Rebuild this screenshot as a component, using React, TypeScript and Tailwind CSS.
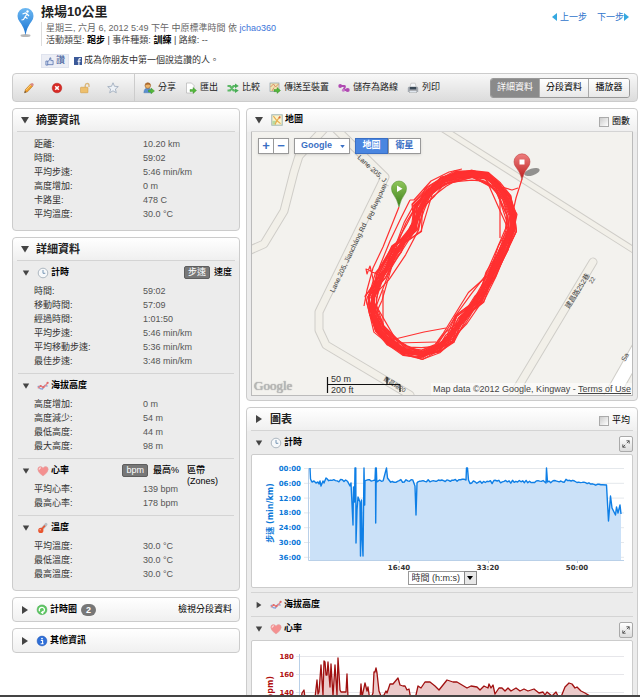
import React, { useId, useState } from 'react';

const FONT = "font-['Liberation_Sans','Noto_Sans_CJK_TC',sans-serif]";
const AXIS_FONT = "font-['DejaVu_Sans','Noto_Sans_CJK_TC',sans-serif]";

type Point = [number, number];
type Row = [string, string];

const summaryRows: Row[] = [
  ['距離:', '10.20 km'],
  ['時間:', '59:02'],
  ['平均步速:', '5:46 min/km'],
  ['高度增加:', '0 m'],
  ['卡路里:', '478 C'],
  ['平均溫度:', '30.0 °C'],
];

const timingRows: Row[] = [
  ['時間:', '59:02'],
  ['移動時間:', '57:09'],
  ['經過時間:', '1:01:50'],
  ['平均步速:', '5:46 min/km'],
  ['平均移動步速:', '5:36 min/km'],
  ['最佳步速:', '3:48 min/km'],
];

const elevationRows: Row[] = [
  ['高度增加:', '0 m'],
  ['高度減少:', '54 m'],
  ['最低高度:', '44 m'],
  ['最大高度:', '98 m'],
];

const heartRows: Row[] = [
  ['平均心率:', '139 bpm'],
  ['最高心率:', '178 bpm'],
];

const tempRows: Row[] = [
  ['平均溫度:', '30.0 °C'],
  ['最低溫度:', '30.0 °C'],
  ['最高溫度:', '30.0 °C'],
];

// Small seeded generator, so the drawing is the same on every render
const makeRandom = (seed: number) => {
  let s = seed;
  return () => {
    s = (s * 1103515245 + 12345) % 2147483648;
    return s / 2147483648;
  };
};

const toPath = (pts: Point[]) => pts.map((p, i) => `${i ? 'L' : 'M'}${p[0].toFixed(1)} ${p[1].toFixed(1)}`).join('');

/* ---------- Track laps ---------- */

const trackCentre: Point[] = [
  [413, 227], [420, 208], [430, 192], [443, 181], [457, 176], [472, 174], [486, 177], [497, 186], [506, 198],
  [512, 215], [511, 230], [504, 248], [491, 275], [477, 298], [462, 320], [449, 338], [437, 348], [422, 354],
  [405, 351], [390, 341], [379, 329], [373, 313], [373, 298], [382, 276], [398, 250],
];

// How far the laps drift apart on each stretch of the track
const spreadAt = (i: number) => {
  if (i > 21 || i < 2) return 13;
  if (i > 12 && i < 16) return 13;
  return 5;
};

const buildLaps = () => {
  const rnd = makeRandom(77);
  const n = trackCentre.length;
  const laps: string[] = [];
  for (let lap = 0; lap < 24; lap++) {
    const base = (rnd() - 0.5) * 9;
    const pts: Point[] = [];
    for (let i = 0; i < n; i++) {
      if (rnd() < 0.1) continue;
      const prev = trackCentre[(i + n - 1) % n];
      const next = trackCentre[(i + 1) % n];
      const len = Math.hypot(next[0] - prev[0], next[1] - prev[1]);
      const off = base + (rnd() - 0.5) * spreadAt(i);
      pts.push([
        trackCentre[i][0] + (-(next[1] - prev[1]) / len) * off,
        trackCentre[i][1] + ((next[0] - prev[0]) / len) * off,
      ]);
    }
    laps.push(toPath(pts) + 'Z');
  }
  return laps;
};

const laps = buildLaps();

/* ---------- Chart data ---------- */

const wiggle = (x0: number, x1: number, y0: number, y1: number, amp: number, seed: number): Point[] => {
  const rnd = makeRandom(seed);
  const pts: Point[] = [];
  for (let x = x0; x <= x1; x += 1.7) {
    const t = (x - x0) / (x1 - x0);
    pts.push([x, y0 + (y1 - y0) * t + (rnd() - 0.5) * amp * 2]);
  }
  return pts;
};

const pace: Point[] = [
  [310, 468], [310.5, 479], [312, 482], [314, 481], [316, 483], [318, 482], [319, 484], [320, 481], [321, 486],
  [323, 481], [324, 483], [326, 478],
  ...wiggle(327, 348, 480, 481, 1.3, 4),
  [350, 486], [351, 483], [353, 525], [353.5, 487], [354.5, 502], [355, 468], [355.8, 468], [356, 543], [357, 510],
  [358, 497], [360, 502], [360.5, 556], [361.5, 500], [362, 535], [363, 556], [364, 468], [364.7, 505], [365, 481],
  ...wiggle(366, 374, 480, 481, 1.3, 9),
  [375, 480], [375.5, 468], [375.7, 523], [376.3, 468], [376.8, 482],
  ...wiggle(378, 384, 481, 480, 1.2, 3),
  [386.5, 468], [387.5, 478],
  ...wiggle(389, 413, 481, 481, 1.5, 12),
  [415, 486], [416, 515], [417, 483],
  ...wiggle(418, 464, 481, 480, 1.3, 21),
  [466, 480], [466.5, 468], [467.5, 468], [468.5, 480],
  ...wiggle(470, 544, 482, 482, 1.7, 31),
  [546, 483], [546.5, 468], [547.5, 482],
  ...wiggle(549, 565, 482, 481, 1.2, 8),
  ...wiggle(566, 576, 480, 481, 0.8, 6),
  ...wiggle(577, 604, 482, 485.5, 1.1, 15),
  [606.5, 485], [608.5, 521], [610.5, 496], [612, 508], [614, 512], [615.5, 515], [616.5, 507], [618, 513],
  [620, 505], [621, 514],
];

const heart: Point[] = [
  [301, 700], [302, 692], [304, 689], [305, 697], [315, 697], [317, 679], [318, 693], [319, 691], [321, 664],
  [323, 694], [324, 660], [325, 661], [326, 674], [327, 674], [328, 661], [330, 686], [331, 663], [333, 695],
  [335, 664], [337, 694], [338, 657], [340, 689], [341, 691], [346, 691], [347, 673], [348, 697], [360, 698],
  [361, 683], [362, 696], [365, 682], [367, 690], [368, 686], [370, 700], [373, 692], [374, 671], [375, 671],
  [376, 667], [377, 672], [379, 690], [381, 695], [384, 694], [386, 690], [387, 692], [390, 683], [393, 683],
  [398, 677], [400, 684], [403, 685], [405, 685], [407, 689], [409, 688], [411, 699], [416, 694], [418, 685],
  [421, 687], [425, 681], [430, 681], [435, 685], [439, 689], [443, 684], [447, 679], [453, 681], [457, 681],
  [462, 684], [467, 687], [471, 685], [477, 686], [480, 689], [484, 685], [488, 687], [489, 683], [491, 687],
  [493, 684], [495, 693], [499, 687], [502, 687], [505, 690], [508, 687], [511, 690], [516, 687], [520, 690],
  [524, 688], [528, 690], [534, 688], [539, 692], [543, 691], [545, 694], [547, 691], [552, 695], [556, 691],
  [558, 695], [561, 696], [565, 686], [569, 682], [572, 683], [575, 687], [577, 686], [581, 690], [585, 692],
  [590, 695], [600, 699], [622, 705],
];

const areaPath = (pts: Point[], base: number) =>
  `${toPath(pts)}L${pts[pts.length - 1][0]} ${base}L${pts[0][0]} ${base}Z`;

/* ---------- Icons ---------- */

interface IconProps {
  children: React.ReactNode;
}

const Icon: React.FC<IconProps> = ({ children }) => (
  <svg viewBox="0 0 12 12" className="w-3 h-3 shrink-0" aria-hidden="true">{children}</svg>
);

const PencilIcon = () => (
  <Icon>
    <path d="M1.5 10.8 2.4 7.6 7.6 2 9.8 4.1 4.6 9.7Z" fill="#f0a02c" stroke="#a8661a" strokeWidth=".5" />
    <path d="M7.2 2.4 8.4 1.2Q9.3.6 10.2 1.6 11.2 2.6 10.5 3.4L9.4 4.6Z" fill="#d98a86" />
    <path d="M1.5 10.8 2 8.9 3.3 10.2Z" fill="#444" />
    <path d="M3.2 8 7.8 3" stroke="#ffdc8a" strokeWidth=".8" />
  </Icon>
);

const CloseIcon = () => (
  <Icon>
    <circle cx="6" cy="6" r="4.8" fill="#d82a25" stroke="#b01c18" strokeWidth=".5" />
    <path d="M4.2 4.2 7.8 7.8M7.8 4.2 4.2 7.8" stroke="#fff" strokeWidth="1.6" />
  </Icon>
);

const LockIcon = () => (
  <Icon>
    <path d="M6.2 5.5V3.5Q6.4 1.5 8.2 1.5T10 3.5V5" fill="none" stroke="#d9b67a" strokeWidth="1.3" />
    <rect x="1.5" y="5.2" width="7.5" height="5.6" rx=".6" fill="#eab65c" stroke="#cf9a45" strokeWidth=".5" />
    <path d="M2 7H8.5M2 9H8.5" stroke="#f8d898" strokeWidth=".6" />
  </Icon>
);

const StarIcon = () => (
  <Icon>
    <path d="M6 .8 7.5 4.3 11.3 4.6 8.4 7.1 9.3 10.8 6 8.8 2.7 10.8 3.6 7.1.7 4.6 4.5 4.3Z" fill="#edf1f6" stroke="#9aa8ba" strokeWidth=".8" />
  </Icon>
);

const ShareIcon = () => (
  <Icon>
    <path d="M.8 10.8Q1 6 4.8 6T8.5 10.8Z" fill="#5a8fd0" stroke="#3f6ea8" strokeWidth=".4" />
    <circle cx="4.8" cy="3.6" r="2.8" fill="#edb56c" stroke="#8f5a28" strokeWidth=".6" />
    <path d="M2 3.400Q2.500.8 5 .8 7.400 1 7.600 3.200 5 1.800 2 3.400Z" fill="#a8662c" />
    <path d="M5.5 8H8V6L11.5 9 8 11.8V10H5.5Z" fill="#54b83c" stroke="#2f8a1e" strokeWidth=".4" />
  </Icon>
);

const ExportIcon = () => (
  <Icon>
    <path d="M1.5 1H6.5L9 3.5V11H1.5Z" fill="#fff" stroke="#aaa" strokeWidth=".6" />
    <path d="M5 7.5H8V5.5L11.5 8.5 8 11.4V9.6H5Z" fill="#54b83c" stroke="#2f8a1e" strokeWidth=".4" />
  </Icon>
);

const CompareIcon = () => (
  <Icon>
    <path d="M.5 4H3L6.5 8.5H9M.5 8.5H3L6.5 4H9" fill="none" stroke="#5cb866" strokeWidth="2.2" />
    <path d="M8 1.4 11.8 4 8 6.2ZM8 6.4 11.8 8.6 8 11Z" fill="#47ad55" />
  </Icon>
);

const SendIcon = () => (
  <Icon>
    <rect x="1" y="1" width="9" height="8.5" fill="#f2e3b0" stroke="#8fa0a8" strokeWidth=".7" />
    <path d="M1.5 5 4.5 2 6.5 5 9.5 2M3 9 5 5.5" stroke="#d27b5a" strokeWidth=".8" fill="none" />
    <path d="M5 7.5H8V5.5L11.5 8.5 8 11.4V9.6H5Z" fill="#54b83c" stroke="#2f8a1e" strokeWidth=".4" />
  </Icon>
);

const CourseIcon = () => (
  <Icon>
    <path d="M2 4H6.4Q7.2 4 6.6 5.6L5.4 8H9.6" fill="none" stroke="#b04ab2" strokeWidth="2" strokeLinejoin="round" />
    <circle cx="2.2" cy="4" r="1.9" fill="#b04ab2" />
    <circle cx="9.6" cy="8" r="2.1" fill="#b04ab2" />
    <circle cx="5.4" cy="8.3" r="1.5" fill="#c87aca" />
  </Icon>
);

const PrintIcon = () => (
  <Icon>
    <path d="M3 5 4 1.2H8.2L9.2 5Z" fill="#f4f6fa" stroke="#aaa" strokeWidth=".5" />
    <path d="M.8 6Q.8 4.8 2 4.8H10Q11.2 4.8 11.2 6V10H.8Z" fill="#a5abb2" />
    <rect x="2.8" y="5" width="6.4" height="2.4" fill="#3a4856" />
    <rect x="2.2" y="8.6" width="7.6" height="2.2" fill="#dfe6ee" stroke="#999" strokeWidth=".4" />
  </Icon>
);

const ClockIcon = () => (
  <Icon>
    <circle cx="6" cy="6" r="4.8" fill="#f6f8fa" stroke="#a5b0ba" strokeWidth=".9" />
    <path d="M6 3V6.3H8.3" fill="none" stroke="#6a8cae" strokeWidth=".9" />
  </Icon>
);

const ElevationIcon = () => (
  <Icon>
    <path d="M.8 5.800 3.200 8.600 5.400 9 7.600 5.400 10.600 6.200" fill="none" stroke="#7f9bd6" strokeWidth="1.2" />
    <path d="M.8 8.200 3.600 5.800 6.200 7.400 8 6 11 2.600" fill="none" stroke="#e88585" strokeWidth="1.4" />
    <circle cx="3.600" cy="6" r="1.100" fill="#e06a6a" />
    <circle cx="6.400" cy="7.200" r="1.100" fill="#e06a6a" />
    <circle cx="10.600" cy="2.800" r="1.100" fill="#e06a6a" />
  </Icon>
);

const HeartIcon = () => (
  <Icon>
    <path d="M6 11Q.8 7.3.8 4.4.9 1.6 3.4 1.6 5.2 1.6 6 3.2 6.8 1.6 8.6 1.6 11.1 1.6 11.2 4.4 11.2 7.3 6 11Z" fill="#f49090" stroke="#e3a5a5" strokeWidth=".6" />
    <path d="M2.2 4.8Q2.2 2.8 4 2.9" stroke="#fcd5d5" strokeWidth="1.2" fill="none" />
  </Icon>
);

const TempIcon = () => (
  <Icon>
    <path d="M4 8 9 2.4" stroke="#b9bec4" strokeWidth="3" strokeLinecap="round" />
    <path d="M4 8 7.6 4" stroke="#e8552f" strokeWidth="1.6" strokeLinecap="round" />
    <circle cx="3.8" cy="8.4" r="2.6" fill="#e8552f" />
    <circle cx="3.2" cy="7.8" r=".8" fill="#f7b29c" />
  </Icon>
);

const LapIcon = () => (
  <Icon>
    <circle cx="6" cy="5.8" r="4.9" fill="#5fc864" stroke="#3da046" strokeWidth=".5" />
    <path d="M3.6 7.2A2.6 2.6 0 1 1 6.6 8.4" fill="none" stroke="#fff" strokeWidth="1.3" />
    <path d="M7.2 6.6V10.4L4.6 8.6Z" fill="#fff" />
  </Icon>
);

const InfoIcon = () => (
  <Icon>
    <circle cx="6" cy="6" r="4.9" fill="#2f6fd8" stroke="#2054ae" strokeWidth=".5" />
    <circle cx="6" cy="3.6" r=".9" fill="#fff" />
    <path d="M4.8 5.5H6.6V8.6M4.6 8.8H7.6" stroke="#fff" strokeWidth="1.1" fill="none" />
  </Icon>
);

const MapIcon = () => (
  <Icon>
    <rect x=".8" y=".8" width="10.4" height="10.4" fill="#fbf4cc" stroke="#9fb5b2" strokeWidth="1" />
    <rect x="1.4" y="6.8" width="3.6" height="3.8" fill="#b7d9a0" />
    <path d="M2.4 2.2 6 6.8 9.6 9.6M4 10.5 6 6.6 9.2 2.2" fill="none" stroke="#e8ad50" strokeWidth="1.2" />
    <circle cx="8.6" cy="3.4" r="1" fill="#d8644a" />
  </Icon>
);

const Arrow: React.FC<{ open: boolean; small?: boolean }> = ({ open, small }) => (
  <svg viewBox="0 0 10 10" className={small ? 'w-2 h-2 shrink-0' : 'w-[10px] h-[10px] shrink-0'} aria-hidden="true">
    <path d={open ? 'M1 2H9L5 8.5Z' : 'M2 1V9L8 5Z'} fill="#444" />
  </svg>
);

/* ---------- Building blocks ---------- */

const DataList: React.FC<{ rows: Row[] }> = ({ rows }) => (
  <dl className="grid grid-cols-[109px_1fr] pl-4 leading-[14px]">
    {rows.map(([label, value]) => (
      <React.Fragment key={label}>
        <dt className="text-[#333] whitespace-nowrap">{label}</dt>
        <dd className="text-[#555] whitespace-nowrap">{value}</dd>
      </React.Fragment>
    ))}
  </dl>
);

interface PanelProps {
  title: string;
  open?: boolean;
  icon?: React.ReactNode;
  extra?: React.ReactNode;
  children?: React.ReactNode;
}

const Panel: React.FC<PanelProps> = ({ title, open = true, icon, extra, children }) => (
  <section className="rounded border border-[#ccc] bg-[#ececec]">
    <div className="px-1 rounded-t bg-linear-to-b from-white to-[#efefef]">
      <div className="h-[23px] px-[3px] flex items-center border-b border-[#d4d4d4]">
        <button className="flex items-center">
          <Arrow open={open} />
          {icon && <span className="ml-[7px]">{icon}</span>}
          <h2 className={icon ? 'ml-[2px] text-[9px] font-bold text-black' : 'ml-[6px] text-[11px] font-bold text-[#222]'}>{title}</h2>
        </button>
        <div className="ml-auto pt-1">{extra}</div>
      </div>
    </div>
    {children}
  </section>
);

interface SubHeadProps {
  title: string;
  icon: React.ReactNode;
  open?: boolean;
  extra?: React.ReactNode;
}

const SubHead: React.FC<SubHeadProps> = ({ title, icon, open = true, extra }) => (
  <div className="h-[23px] flex items-center pl-1">
    <button className="flex items-center">
      <Arrow open={open} small />
      <span className="ml-[7px]">{icon}</span>
      <h3 className="ml-[2px] font-bold text-black">{title}</h3>
    </button>
    <div className="ml-auto">{extra}</div>
  </div>
);

const Collapsed: React.FC<{ title: string; icon: React.ReactNode; children?: React.ReactNode }> = ({ title, icon, children }) => (
  <section className="h-[25px] rounded border border-[#ccc] bg-linear-to-b from-white to-[#f0f0f0] flex items-center px-[7px]">
    <button className="flex items-center">
      <Arrow open={false} />
      <span className="ml-[6px]">{icon}</span>
      <h2 className="ml-[2px] font-bold text-black">{title}</h2>
    </button>
    {children}
  </section>
);

const CheckOption: React.FC<{ label: string }> = ({ label }) => {
  const id = useId();
  return (
    <span className="flex items-center gap-[3px]">
      <input id={id} type="checkbox" className="appearance-none w-[10px] h-[10px] border border-[#aaa] bg-linear-to-br from-[#ccc] to-white checked:bg-[#666]" />
      <label htmlFor={id} className="text-black">{label}</label>
    </span>
  );
};

const ExpandButton = () => (
  <button aria-label="放大" className="flex items-center justify-center w-[14px] h-4 mt-[2px] rounded-[2px] border border-[#aaa] bg-linear-to-b from-white to-[#ddd]">
    <svg viewBox="0 0 10 10" className="w-2 h-2">
      <path d="M5.5 1H9V4.5M9 1 6 4M4.500 9H1V5.500M1 9 4 6" fill="none" stroke="#555" strokeWidth="1.200" />
    </svg>
  </button>
);

/* ---------- Map ---------- */

const roads = [
  'M324 129 299 156 294 172 284 211 264 244 248 251',
  'M336 129 385 177 319 312V330L326 345 410 395',
  'M443 129 640 254',
  'M593 262 512 397',
];

const MapDrawing = () => (
  <svg viewBox="252 132 380 263" className="block w-full" role="img" aria-label="地圖">
    <rect x="252" y="132" width="380" height="263" fill="#f3f2ee" />
    {roads.map((d, i) => (
      <path key={d} d={d} fill="none" stroke="#cfcdc8" strokeWidth={i === 2 ? 7 : 9} strokeLinejoin="round" strokeLinecap="round" />
    ))}
    {roads.map((d, i) => (
      <path key={d} d={d} fill="none" stroke="#f2f0e9" strokeWidth={i === 2 ? 5 : 7} strokeLinejoin="round" strokeLinecap="round" />
    ))}
    <path d="M642 342 608 402" stroke="#cfcdc8" strokeWidth="15" />
    <path d="M642 342 608 402" stroke="#fff" strokeWidth="13" />

    <path id="lane-upper" d="M357 158 384 183 358 236" fill="none" />
    <path id="lane-lower" d="M334 293 375 207" fill="none" />
    <g className={FONT} fill="#444" fontSize="7">
      <text><textPath href="#lane-upper">Lane 205, Jiancháng Rd</textPath></text>
      <text><textPath href="#lane-lower">Lane 205, Jiancháng Rd</textPath></text>
      <text transform="translate(569 309) rotate(-58)">建昌路252巷</text>
      <text transform="translate(592 284) rotate(-58)" fontSize="6">22</text>
      <text transform="translate(383 380) rotate(31)" fontSize="6">建昌路20</text>
      <text transform="translate(625 362) rotate(-60)">Sa</text>
    </g>

    <g fill="none" stroke="#ff3030" strokeWidth="1.2" strokeLinejoin="round">
      {laps.map((d) => <path key={d} d={d} />)}
      <path d={toPath(trackCentre) + 'Z'} strokeWidth="4" />
      <path d="M399 207 383 247 373 268 367 290 364 306" />
      <path d="M410 200 401 218 390 241 379 268" />
      <path d="M410 200 414 200 431 181 449 172 462 169" />
      <path d="M522 179 516 198 512 216M518 188 512 190 502 187" />
      <path d="M500 190V238M383 290V330" />
      <path d="M391 340 424 332 446 328M396 343 436 342" />
      <path d="M366 269 381 276 374 283 370 266 367 274Z" />
      <path d="M420 358 441 346 459 322 478 296" />
    </g>

    <ellipse cx="532" cy="172" rx="8" ry="3.4" fill="#000" opacity=".4" transform="rotate(-18 532 172)" />
    <defs>
      <linearGradient id="pin-green" x1="0" y1="0" x2="0" y2="1">
        <stop offset="0" stopColor="#8fc65b" />
        <stop offset="1" stopColor="#3c7f18" />
      </linearGradient>
      <linearGradient id="pin-red" x1="0" y1="0" x2="0" y2="1">
        <stop offset="0" stopColor="#ee7f7f" />
        <stop offset="1" stopColor="#bb1c1c" />
      </linearGradient>
    </defs>
    <path d="M399 207Q397 199 393.500 194.500 391.500 192 391.500 188.500A7.500 7.500 0 0 1 406.500 188.500Q406.500 192 404.500 194.500 401 199 399 207Z" fill="url(#pin-green)" stroke="#4c8a28" strokeWidth=".5" />
    <path d="M397 185.500 402.500 188.700 397 192Z" fill="#fff" />
    <path d="M522 179.500Q520 172 516.200 167.500 514 165 514 161.800A8 8 0 0 1 530 161.800Q530 165 527.800 167.500 524 172 522 179.500Z" fill="url(#pin-red)" stroke="#b93030" strokeWidth=".5" />
    <rect x="519.500" y="159.500" width="5" height="5" fill="#fff" />

    {/* Scale bar */}
    <rect x="431" y="383" width="201" height="12" fill="#fff" opacity=".55" />
    <path d="M327.500 377V393M327 384.500H400M387 377V384.500M400 384.500V392" fill="none" stroke="#111" strokeWidth="1.200" />
    <g className={FONT} fill="#333" fontSize="9">
      <text x="331" y="382">50 m</text>
      <text x="331" y="393">200 ft</text>
    </g>
  </svg>
);

const mapButton = 'h-4 flex items-center justify-center border border-[#999] bg-white text-[#3a6fc4] font-bold';

const MapView = () => {
  const [type, setType] = useState('地圖');
  return (
    <div className="relative mx-1 mb-1 border-x border-b border-[#bbb] overflow-hidden">
      <MapDrawing />
      <div className="absolute top-[6px] left-[6px] flex items-start gap-[5px]">
        <div className="flex shadow-sm">
          <button className={`${mapButton} w-4 text-[13px]`}>+</button>
          <button className={`${mapButton} w-[15px] text-[13px] border-l-0`}>−</button>
        </div>
        <div className="relative shadow-sm">
          <select aria-label="地圖供應商" className={`${mapButton} appearance-none w-14 pl-[6px]`}>
            <option>Google</option>
          </select>
          <svg viewBox="0 0 6 4" className="absolute right-[5px] top-[7px] w-[5px] h-[3px] pointer-events-none">
            <path d="M0 0H6L3 4Z" fill="#3a6fc4" />
          </svg>
        </div>
        <div className="flex shadow-sm">
          {['地圖', '衛星'].map((t) => (
            <button
              key={t}
              onClick={() => setType(t)}
              className={`h-4 w-[33px] flex items-center justify-center border font-bold ${t === type ? 'bg-[#4a86e0] border-[#3a6fc4] text-white' : 'bg-white border-[#999] text-[#3a6fc4]'}`}
            >
              {t}
            </button>
          ))}
        </div>
      </div>
      <span className="absolute left-[2px] bottom-[1px] font-['Liberation_Serif',serif] text-[13px] leading-4 text-[#bbb] [text-shadow:0_0_1px_#777]">Google</span>
      <p className="absolute right-[1px] bottom-0 leading-3 text-[#444] whitespace-nowrap">
        Map data ©2012 Google, Kingway - <a href="#terms" className="underline">Terms of Use</a>
      </p>
    </div>
  );
};

/* ---------- Charts ---------- */

const paceTicks = ['00:00', '06:00', '12:00', '18:00', '24:00', '30:00', '36:00'];
const timeTicks: [number, string][] = [[399, '16:40'], [488, '33:20'], [577, '50:00']];

const PaceChart = () => (
  <svg viewBox="252 455 380 116" className={`block w-full ${AXIS_FONT}`} role="img" aria-label="步速">
    {paceTicks.map((t, i) => (
      <g key={t}>
        <path d={`M304 ${468.5 + i * 14.8}H624`} stroke="#e4e8ec" />
        <text x="301" y={471 + i * 14.8} textAnchor="end" fontSize="7" fontWeight="bold" fill="#0b78d8">{t}</text>
      </g>
    ))}
    <path d={areaPath(pace, 560)} fill="#cbe1f8" />
    <path d="M308.500 468V560.500H624" fill="none" stroke="#b9d0e8" />
    <path d={toPath(pace)} fill="none" stroke="#0f7fe6" strokeWidth="1.400" strokeLinejoin="round" />
    {timeTicks.map(([x, t]) => (
      <g key={t}>
        <path d={`M${x}.5 560V563`} stroke="#b9d0e8" />
        <text x={x} y="569.500" textAnchor="middle" fontSize="7" fontWeight="bold" fill="#333">{t}</text>
      </g>
    ))}
    <text transform="translate(273 513) rotate(-90)" textAnchor="middle" fontSize="8" fontWeight="bold" fill="#0b78d8">步速 (min/km)</text>
  </svg>
);

const HeartChart = () => (
  <svg viewBox="252 640 380 116" className={`block w-full ${AXIS_FONT}`} role="img" aria-label="心率">
    {['180', '160', '140', '120', '100'].map((t, i) => (
      <g key={t}>
        <path d={`M296 ${655.5 + i * 18}H624`} stroke="#e6e6ea" />
        <text x="294" y={658 + i * 18} textAnchor="end" fontSize="7" fontWeight="bold" fill="#b01010">{t}</text>
      </g>
    ))}
    <path d={areaPath(heart, 745)} fill="#ebcaca" />
    <path d="M299.500 653V745H624" fill="none" stroke="#b9d0e8" />
    <path d={toPath(heart)} fill="none" stroke="#a01010" strokeWidth="1.300" strokeLinejoin="round" />
    <text transform="translate(273 698) rotate(-90)" textAnchor="middle" fontSize="8" fontWeight="bold" fill="#b01010">心率 (bpm)</text>
  </svg>
);

const ChartBox: React.FC<{ children: React.ReactNode }> = ({ children }) => (
  <div className="rounded-[2px] border border-[#ccc] bg-white pb-[2px]">
    {children}
    <div className="flex justify-center">
      <div className="relative">
        <select aria-label="X 軸" className="block appearance-none h-[14px] w-[69px] pl-[3px] border border-[#999] bg-white text-[#333]">
          <option>時間 (h:m:s)</option>
        </select>
        <span className="absolute right-0 top-0 w-[13px] h-[14px] flex items-center justify-center border border-[#888] bg-[#e8e8e8] pointer-events-none">
          <svg viewBox="0 0 6 4" className="w-[6px] h-1"><path d="M0 0H6L3 4Z" fill="#000" /></svg>
        </span>
      </div>
    </div>
  </div>
);

/* ---------- Page ---------- */

const tools = [
  { label: '分享', icon: <ShareIcon /> },
  { label: '匯出', icon: <ExportIcon /> },
  { label: '比較', icon: <CompareIcon /> },
  { label: '傳送至裝置', icon: <SendIcon /> },
  { label: '儲存為路線', icon: <CourseIcon /> },
  { label: '列印', icon: <PrintIcon /> },
];

const Header = () => (
  <header className="flex items-start shrink-0 h-[73px] pl-[5px]">
    <svg viewBox="0 0 18 32" className="w-[18px] h-8 mt-[7px] shrink-0" aria-hidden="true">
      <defs>
        <linearGradient id="pin-blue" x1="0" y1="0" x2="0" y2="1">
          <stop offset="0" stopColor="#6db8f2" />
          <stop offset="1" stopColor="#1873d2" />
        </linearGradient>
      </defs>
      <ellipse cx="8.500" cy="28.500" rx="5" ry="1.500" fill="#888" opacity=".6" />
      <path d="M8.500 28Q7 20 2.500 14.500.5 12 .5 9A8 8 0 0 1 16.500 9Q16.500 12 14.500 14.500 10 20 8.500 28Z" fill="url(#pin-blue)" />
      <circle cx="10.500" cy="4.500" r="1.200" fill="#fff" />
      <path d="M5.500 7 8.500 6 10 7 8 10 10.500 11.500M10 7 12 9M8 10 6.500 12.500 4.500 13" fill="none" stroke="#fff" strokeWidth="1.200" />
    </svg>
    <div className="ml-[6px] pt-[3px]">
      <h1 className="text-[13px] leading-[18px] font-bold text-[#222]">操場10公里</h1>
      <div className="border-l border-[#ddd] pl-1 mt-[1px] leading-3 whitespace-nowrap">
        <p className="text-[#666]">星期三, 六月 6, 2012 5:49 下午 中原標準時間 依 <a href="#profile" className="text-[#3b73d9]">jchao360</a></p>
        <p className="text-[#444]">活動類型: <b className="text-black">跑步</b> | 事件種類: <b className="text-black">訓練</b> | 路線: --</p>
      </div>
      <div className="flex items-center mt-2 text-[#333]">
        <button className="flex items-center justify-center gap-[2px] w-7 h-[14px] bg-[#eceef5] border border-[#dfe3ee] text-[#3b5998]">
          <svg viewBox="0 0 10 10" className="w-[9px] h-[9px]" aria-hidden="true">
            <path d="M1 4.500H3V9H1ZM3 5 5 3.500 5.500 1H6.500V4H9V8.500H3" fill="#dde4f4" stroke="#4a68a8" strokeWidth=".8" />
          </svg>
          讚
        </button>
        <svg viewBox="0 0 8 8" className="w-2 h-2 ml-[5px]" aria-hidden="true">
          <rect width="8" height="8" fill="#3b5998" />
          <path d="M6.800 1.600H5.800Q4.900 1.600 4.900 2.600V8M3.500 4.200H6.600" stroke="#fff" fill="none" strokeWidth="1.100" />
        </svg>
        <span className="ml-[2px]">成為你朋友中第一個說這讚的人。</span>
      </div>
    </div>
    <nav className="ml-auto mt-[10px] mr-[9px] flex gap-[10px] leading-[14px] text-[#2f75cc]">
      <a href="#prev" className="flex items-center gap-[3px]">
        <svg viewBox="0 0 5 8" className="w-[5px] h-2"><path d="M5 0V8L0 4Z" fill="#35a8e0" /></svg>
        上一步
      </a>
      <a href="#next" className="flex items-center">
        下一步
        <svg viewBox="0 0 5 8" className="w-[5px] h-2"><path d="M0 0V8L5 4Z" fill="#35a8e0" /></svg>
      </a>
    </nav>
  </header>
);

const Toolbar: React.FC = () => {
  const [view, setView] = useState('詳細資料');
  return (
    <div className="h-[29px] shrink-0 flex items-center rounded border border-[#ccc] bg-linear-to-b from-[#f8f8f8] to-[#dcdcdc]">
      <div className="flex items-center gap-4 w-[122px] h-full pl-[10px] border-r border-[#ccc]">
        <button aria-label="編輯"><PencilIcon /></button>
        <button aria-label="刪除"><CloseIcon /></button>
        <button aria-label="隱私"><LockIcon /></button>
        <button aria-label="最愛"><StarIcon /></button>
      </div>
      <div className="flex items-center gap-[9px] pl-2 text-[#222] whitespace-nowrap">
        {tools.map((tool) => (
          <button key={tool.label} className="flex items-center gap-[3px]">
            {tool.icon}
            {tool.label}
          </button>
        ))}
      </div>
      <div className="ml-auto mr-[7px] flex rounded-[3px] border border-[#999] overflow-hidden">
        {['詳細資料', '分段資料', '播放器'].map((label) => (
          <button
            key={label}
            onClick={() => setView(label)}
            className={`h-[18px] border-r last:border-r-0 border-[#aaa] ${label === '播放器' ? 'w-10' : 'w-[49px]'} ${label === view ? 'bg-[#8a8a8a] text-white' : 'bg-linear-to-b from-white to-[#e8e8e8] text-black'}`}
          >
            {label}
          </button>
        ))}
      </div>
    </div>
  );
};

const pill = 'h-[13px] px-[3px] leading-[11px] rounded-[2px] bg-[#777] border border-[#5e5e5e] text-white';

const Sidebar = () => (
  <aside className="flex flex-col gap-[6px]">
    <Panel title="摘要資訊">
      <div className="mx-[5px] pt-[5px] pb-[9px]">
        <DataList rows={summaryRows} />
      </div>
    </Panel>

    <Panel title="詳細資料">
      <div className="mx-[5px] divide-y divide-[#d4d4d4]">
        <div className="pb-[5px]">
          <SubHead
            title="計時"
            icon={<ClockIcon />}
            extra={
              <div className="flex items-center gap-1 mr-[2px]">
                <button className={pill}>步速</button>
                <button className="text-black font-medium">速度</button>
              </div>
            }
          />
          <DataList rows={timingRows} />
        </div>
        <div className="pb-[5px]">
          <SubHead title="海拔高度" icon={<ElevationIcon />} />
          <DataList rows={elevationRows} />
        </div>
        <div className="pb-[5px]">
          <SubHead
            title="心率"
            icon={<HeartIcon />}
            extra={
              <div className="flex items-start gap-[5px] h-[14px] mr-4 leading-[11px] text-black font-medium">
                <button className={pill}>bpm</button>
                <button className="mt-[1px]">最高%</button>
                <button className="mt-[1px] ml-[3px] text-left">區帶<br />(Zones)</button>
              </div>
            }
          />
          <DataList rows={heartRows} />
        </div>
        <div className="pb-[9px]">
          <SubHead title="溫度" icon={<TempIcon />} />
          <DataList rows={tempRows} />
        </div>
      </div>
    </Panel>

    <Collapsed title="計時圈" icon={<LapIcon />}>
      <span className="ml-1 px-[5px] leading-3 rounded-full bg-[#777] text-white font-bold">2</span>
      <a href="#splits" className="ml-auto text-black">檢視分段資料</a>
    </Collapsed>
    <Collapsed title="其他資訊" icon={<InfoIcon />} />
  </aside>
);

const App: React.FC = () => (
  <div className={`h-screen overflow-hidden flex flex-col bg-white border-b-2 border-[#444] pl-3 pr-[2px] text-[9px] ${FONT}`}>
    <Header />
    <Toolbar />
    <div className="mt-[6px] grid grid-cols-[228px_minmax(0,1fr)] gap-[6px] items-start">
      <Sidebar />
      <main className="flex flex-col gap-[6px]">
        <Panel title="地圖" icon={<MapIcon />} extra={<CheckOption label="圈數" />}>
          <MapView />
        </Panel>
        <Panel title="圖表" open={false} extra={<CheckOption label="平均" />}>
          <div className="mx-1">
            <SubHead title="計時" icon={<ClockIcon />} extra={<ExpandButton />} />
            <ChartBox><PaceChart /></ChartBox>
            <div className="mt-1 border-y border-[#d4d4d4]">
              <SubHead title="海拔高度" icon={<ElevationIcon />} open={false} />
            </div>
            <SubHead title="心率" icon={<HeartIcon />} extra={<ExpandButton />} />
            <ChartBox><HeartChart /></ChartBox>
          </div>
        </Panel>
      </main>
    </div>
  </div>
);

export default App;
